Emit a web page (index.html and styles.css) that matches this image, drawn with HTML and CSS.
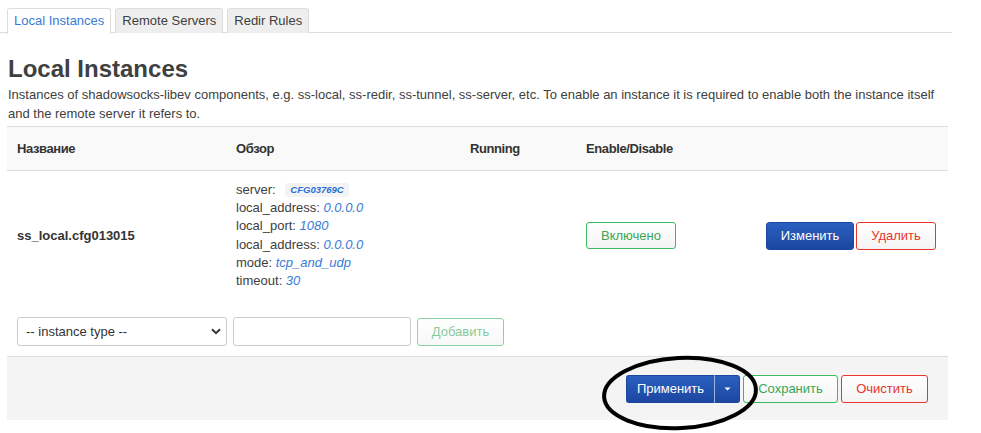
FILE: index.html
```html
<!DOCTYPE html>
<html>
<head>
<meta charset="utf-8">
<link rel="stylesheet" href="styles.css">
</head>
<body>
<div class="page">
  <ul class="tabs">
    <li class="tab active">Local Instances</li>
    <li class="tab">Remote Servers</li>
    <li class="tab">Redir Rules</li>
  </ul>
  <h2 class="title">Local Instances</h2>
  <p class="descr">Instances of shadowsocks-libev components, e.g. ss-local, ss-redir, ss-tunnel, ss-server, etc. To enable an instance it is required to enable both the instance itself and the remote server it refers to.</p>
  <div class="table">
    <div class="thead">
      <div class="c1">Название</div>
      <div class="c2">Обзор</div>
      <div class="c3">Running</div>
      <div class="c4">Enable/Disable</div>
    </div>
    <div class="trow">
      <div class="c1 name">ss_local.cfg013015</div>
      <div class="c2 overview">
        <div>server: <span class="badge">CFG03769C</span></div>
        <div>local_address: <em>0.0.0.0</em></div>
        <div>local_port: <em>1080</em></div>
        <div>local_address: <em>0.0.0.0</em></div>
        <div>mode: <em>tcp_and_udp</em></div>
        <div>timeout: <em>30</em></div>
      </div>
      <div class="c3"></div>
      <div class="c4"><button class="btn btn-green">Включено</button></div>
      <div class="actions">
        <button class="btn btn-blue">Изменить</button>
        <button class="btn btn-red">Удалить</button>
      </div>
    </div>
  </div>
  <div class="addrow">
    <div class="select">-- instance type --<svg width="10" height="7" viewBox="0 0 10 7"><path d="M1 1.2 L5 5.2 L9 1.2" fill="none" stroke="#333" stroke-width="2"/></svg></div>
    <div class="input"></div>
    <button class="btn btn-green faded">Добавить</button>
  </div>
  <div class="footer">
    <div class="split">
      <button class="btn btn-blue apply">Применить</button><button class="btn btn-blue caret"><svg width="7" height="4" viewBox="0 0 7 4"><path d="M0.5 0.5 L6.5 0.5 L3.5 3.5 Z" fill="#fff"/></svg></button>
    </div>
    <button class="btn btn-green">Сохранить</button>
    <button class="btn btn-red">Очистить</button>
  </div>
</div>
<svg class="circle" width="170" height="80" viewBox="0 0 170 80"><ellipse cx="85" cy="40" rx="76" ry="35" fill="none" stroke="#000" stroke-width="4" transform="rotate(-3 85 40)"/></svg>
</body>
</html>
```
FILE: styles.css
```css
* { box-sizing: border-box; }
html, body { height: 100%; overflow: hidden; }
body {
  margin: 0;
  font-family: "Liberation Sans", Arial, sans-serif;
  font-size: 13px;
  color: #404040;
  background: #fff;
  position: relative;
  min-height: 433px;
}
.page {
  width: 952px;
  padding: 8px 0 0 0;
}
.tabs {
  list-style: none;
  margin: 0;
  padding: 0 0 0 7px;
  display: flex;
  gap: 4px;
  border-bottom: 1px solid #ddd;
  height: 25px;
}
.tab {
  height: 25px;
  padding: 0 6px;
  line-height: 24px;
  background: #eee;
  border: 1px solid #ddd;
  border-bottom: none;
  border-radius: 3px 3px 0 0;
  color: #404040;
  font-size: 13px;
}
.tab.active {
  background: #fff;
  color: #3a7bd5;
  height: 26px;
}
.title {
  margin: 22px 0 0 8px;
  font-size: 24px;
  font-weight: bold;
  color: #404040;
  line-height: 28px;
}
.descr {
  margin: 2px 0 0 8px;
  line-height: 19px;
  color: #404040;
}
.table {
  margin: 3px 4px 0 7px;
}
.thead, .trow {
  display: grid;
  grid-template-columns: 219px 234px 116px 180px 1fr;
  align-items: center;
}
.thead {
  height: 45px;
  background: #f9f9f9;
  border-top: 1px solid #ddd;
  border-bottom: 1px solid #ddd;
  font-weight: bold;
  font-size: 13px;
  letter-spacing: -0.4px;
  color: #333;
}
.thead > div, .trow > div { padding-left: 10px; }
.trow {
  padding: 10px 0 14px;
}
.name { font-weight: bold; color: #333; font-size: 13px; }
.overview { line-height: 18.2px; color: #404040; }
.overview em { color: #3a7bd5; }
.badge {
  display: inline-block;
  margin-left: 6px;
  padding: 0 5px;
  background: #f3f3f3;
  border-radius: 3px;
  color: #2a6fd6;
  font-size: 9.5px;
  font-weight: bold;
  font-style: italic;
  line-height: 14px;
  vertical-align: 1px;
}
.actions {
  display: flex;
  justify-content: flex-end;
  gap: 2px;
  padding-right: 12px;
}
.btn {
  font-family: "Liberation Sans", Arial, sans-serif;
  font-size: 13px;
  height: 28px;
  padding: 0 13px;
  border-radius: 3px;
  border: 1px solid;
  background: linear-gradient(#fff, #f4f4f4);
  cursor: pointer;
}
.btn-green { border-color: #3cb963; color: #3aa655; }
.btn-red { border-color: #e8352b; color: #e8352b; }
.btn-blue {
  background: linear-gradient(#2b5fbf, #1c47a1);
  border-color: #1c47a1;
  color: #fff;
}
.c4 .btn { width: 90px; padding: 0; height: 27px; }
.actions .btn-blue { width: 88px; padding: 0; }
.actions .btn-red { width: 80px; padding: 0; }
.addrow {
  display: flex;
  align-items: center;
  gap: 6px;
  padding: 13px 0 10px 10px;
  border-bottom: 1px solid #ddd;
  margin: 0 4px 0 7px;
}
.select {
  width: 210px;
  height: 29px;
  border: 1px solid #ccc;
  border-radius: 3px;
  display: flex;
  align-items: center;
  justify-content: space-between;
  padding: 0 5px 0 8px;
  color: #333;
  font-size: 13px;
}
.input {
  width: 178px;
  height: 29px;
  border: 1px solid #ccc;
  border-radius: 3px;
}
.faded { opacity: 0.6; width: 87px; padding: 0; }
.footer {
  margin: 0 4px 0 7px;
  background: #f4f4f4;
  height: 63px;
  display: flex;
  align-items: center;
  justify-content: flex-end;
  gap: 3px;
  padding: 0 20px 0 0;
}
.split { display: flex; }
.apply { border-radius: 3px 0 0 3px; width: 89px; padding: 0; border-right: 1px solid #9ab4e4; }
.caret { border-radius: 0 3px 3px 0; width: 25px; padding: 0; border-left: none; display: flex; align-items: center; justify-content: center; }
.footer .btn-green { width: 95px; padding: 0; }
.footer .btn-red { width: 87px; padding: 0; }
.circle {
  position: absolute;
  left: 595px;
  top: 353px;
}
```
